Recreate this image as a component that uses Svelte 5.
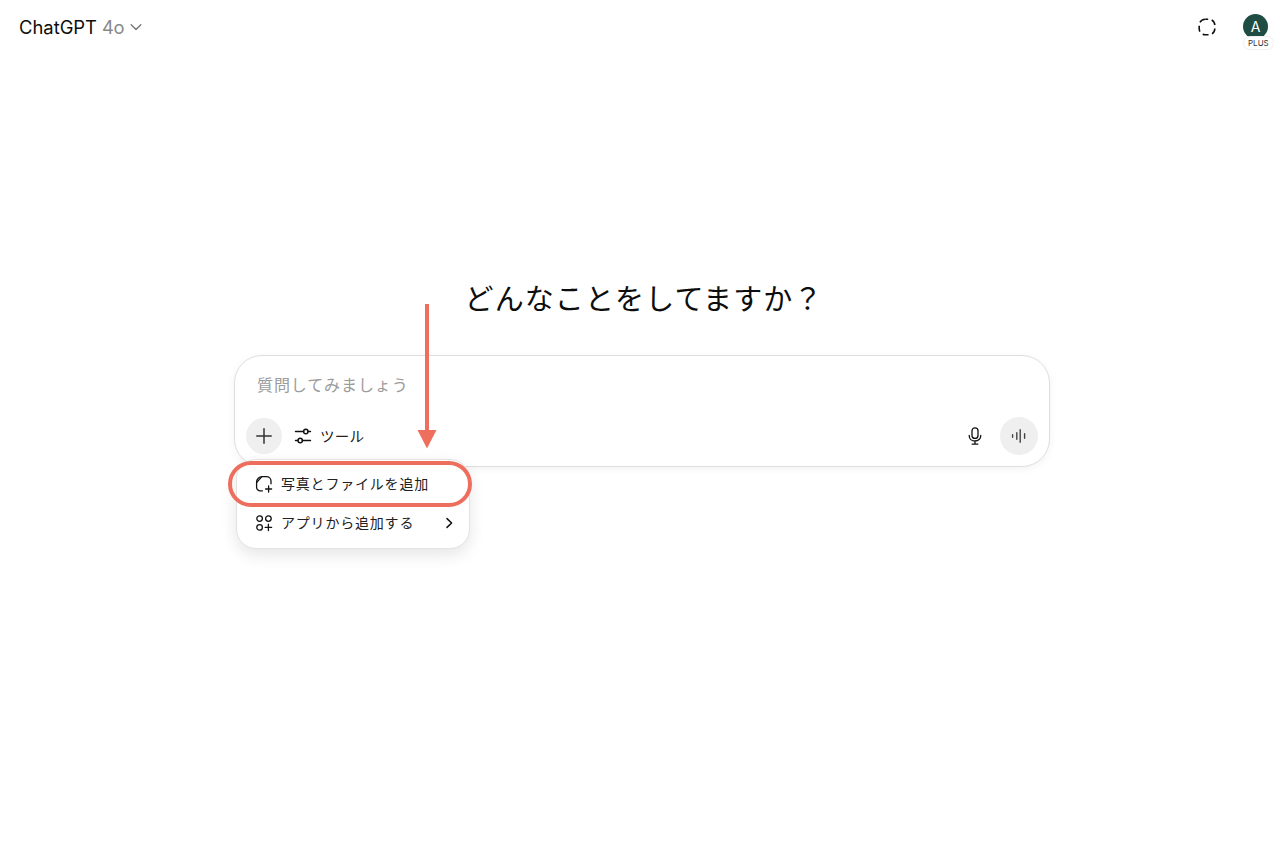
<script>
  const menuItems = [
    { label: "写真とファイルを追加", icon: "file" },
    { label: "アプリから追加する", icon: "apps", more: true }
  ];
</script>

<div class="page">
  <header>
    <div class="model">
      <span>ChatGPT</span>
      <span class="ver">4o</span>
      <svg width="14" height="14" viewBox="0 0 14 14" fill="none" stroke="#777" stroke-width="1.4" stroke-linecap="round" stroke-linejoin="round">
        <path d="M2.2 4.8 7 9.4l4.8-4.6" />
      </svg>
    </div>
    <div class="right">
      <svg width="20" height="20" viewBox="0 0 20 20" fill="none" stroke="#111" stroke-width="1.6">
        <rect x="2.2" y="2.2" width="15.6" height="15.6" rx="6" stroke-dasharray="6 3.6" stroke-dashoffset="3" />
      </svg>
      <div class="avatar">
        A
        <span class="plan">PLUS</span>
      </div>
    </div>
  </header>

  <main>
    <h1>どんなことをしてますか？</h1>

    <div class="composer-wrap">
      <div class="composer">
        <div class="placeholder">質問してみましょう</div>
        <div class="toolbar">
          <button class="round plus" aria-label="追加">
            <svg width="18" height="18" viewBox="0 0 18 18" fill="none" stroke="#333" stroke-width="1.5" stroke-linecap="round">
              <path d="M9 1.8v14.4M1.8 9h14.4" />
            </svg>
          </button>
          <div class="tools">
            <svg width="18" height="18" viewBox="0 0 18 18" fill="none" stroke="#111" stroke-width="1.4" stroke-linecap="round">
              <path d="M1.5 4.5h8.2M14 4.5h2.5M1.5 13.5h2.5M8.3 13.5h8.2" />
              <circle cx="11.8" cy="4.5" r="2.2" />
              <circle cx="6.2" cy="13.5" r="2.2" />
            </svg>
            <span>ツール</span>
          </div>
          <div class="spacer"></div>
          <svg class="mic" width="20" height="20" viewBox="0 0 20 20" fill="none" stroke="#111" stroke-width="1.3" stroke-linecap="round">
            <rect x="7" y="1.8" width="6" height="10.6" rx="3" />
            <path d="M4.2 9.4c0 3.4 2.5 5.6 5.8 5.6s5.8-2.2 5.8-5.6M10 15v3M7.2 18.2h5.6" />
          </svg>
          <button class="round voice" aria-label="音声">
            <svg width="18" height="18" viewBox="0 0 18 18" fill="none" stroke="#444" stroke-width="1.4" stroke-linecap="round">
              <path d="M2.6 7.8v2.4M6.8 5.8v6.4M10.2 2.8v12.4M14.6 6.8v4.4" />
            </svg>
          </button>
        </div>
      </div>

      <div class="menu">
        {#each menuItems as item}
          <div class="item">
            {#if item.icon === "file"}
              <svg width="18" height="18" viewBox="0 0 18 18" fill="none" stroke="#111" stroke-width="1.3" stroke-linecap="round" stroke-linejoin="round">
                <path d="M7.4 15.8H5.2a3.6 3.6 0 0 1-3.6-3.6V7.2c0-3.3 2.5-5.6 5.6-5.6h4.2c2.6 0 4.6 1.9 4.6 4.5v2.7" />
                <path d="M1.8 7.4 6.6 1.8M13.6 11v6M10.6 14h6" />
              </svg>
            {:else}
              <svg width="18" height="18" viewBox="0 0 18 18" fill="none" stroke="#111" stroke-width="1.3" stroke-linecap="round">
                <circle cx="4.6" cy="4.6" r="2.8" />
                <circle cx="13.4" cy="4.6" r="2.8" />
                <circle cx="4.6" cy="13.4" r="2.8" />
                <path d="M13.4 10.2v6.4M10.2 13.4h6.4" />
              </svg>
            {/if}
            <span class="label">{item.label}</span>
            {#if item.more}
              <svg width="14" height="14" viewBox="0 0 14 14" fill="none" stroke="#111" stroke-width="1.5" stroke-linecap="round" stroke-linejoin="round">
                <path d="M5 2.6 9.6 7 5 11.4" />
              </svg>
            {/if}
          </div>
        {/each}
      </div>

      <div class="highlight"></div>

      <svg class="arrow" width="20" height="145" viewBox="0 0 20 145">
        <path d="M10 0v128" stroke="#ef6f5f" stroke-width="4" />
        <path d="M0.5 126h19L10 144.5z" fill="#ef6f5f" />
      </svg>
    </div>
  </main>
</div>

<style>
  :global(body) {
    margin: 0;
    background: #fff;
    color: #0d0d0d;
    font-family: Inter, "Noto Sans CJK JP", sans-serif;
  }

  .page {
    height: 851px;
    overflow: hidden;
  }

  header {
    display: flex;
    align-items: center;
    justify-content: space-between;
    height: 54px;
    padding: 0 12px 0 19px;
  }

  .model {
    display: flex;
    align-items: center;
    gap: 5px;
    font-size: 18.4px;
  }

  .ver {
    color: #8a8a8a;
    letter-spacing: -0.3px;
  }

  .right {
    display: flex;
    align-items: center;
    gap: 26px;
  }

  .avatar {
    position: relative;
    display: flex;
    align-items: center;
    justify-content: center;
    width: 25px;
    height: 25px;
    border-radius: 50%;
    background: #1f4d43;
    color: #fff;
    font-size: 14px;
    font-weight: 400;
    margin-top: -1px;
  }

  .plan {
    position: absolute;
    top: 23px;
    left: 1px;
    padding: 0 4px;
    border-radius: 7px;
    background: #fff;
    box-shadow: 0 0 0 1px #f0f0f0;
    color: #333;
    font-size: 8px;
    line-height: 12px;
    font-weight: 400;
  }

  main {
    display: flex;
    flex-direction: column;
    align-items: center;
    padding: 226px 0 0 4px;
  }

  h1 {
    margin: 0 0 36px;
    padding-left: 4px;
    font-size: 29px;
    line-height: 39px;
    font-weight: 400;
    letter-spacing: 1.1px;
  }

  .composer-wrap {
    position: relative;
    width: 816px;
  }

  .composer {
    box-sizing: border-box;
    height: 112px;
    padding: 19px 11px 11px 11px;
    border: 1px solid #dedede;
    border-radius: 28px;
    background: #fff;
    box-shadow: 0 2px 8px rgba(0, 0, 0, 0.05);
  }

  .placeholder {
    height: 21px;
    padding-left: 11px;
    color: #9b9b9b;
    font-size: 16px;
    letter-spacing: 0.9px;
    line-height: 21px;
  }

  .toolbar {
    display: flex;
    align-items: center;
    margin-top: 21px;
  }

  .round {
    display: flex;
    align-items: center;
    justify-content: center;
    padding: 0;
    border: 0;
    border-radius: 50%;
    background: #efefef;
  }

  .plus {
    width: 36px;
    height: 36px;
  }

  .voice {
    width: 38px;
    height: 38px;
  }

  .tools {
    display: flex;
    align-items: center;
    gap: 8px;
    margin-left: 12px;
    font-size: 14.5px;
    letter-spacing: 0.2px;
    color: #222;
  }

  .tools span {
    margin-bottom: 2px;
  }

  .spacer {
    flex: 1;
  }

  .mic {
    margin-right: 15px;
  }

  .menu {
    position: absolute;
    top: 104px;
    left: 2px;
    box-sizing: border-box;
    width: 234px;
    padding: 4px 0 6px;
    border: 1px solid #e3e3e3;
    border-radius: 20px;
    background: #fff;
    box-shadow: 0 6px 16px rgba(0, 0, 0, 0.1);
  }

  .item {
    display: flex;
    align-items: center;
    gap: 8px;
    height: 39px;
    padding: 0 13px 0 18px;
    font-size: 14px;
    letter-spacing: 0.8px;
    color: #222;
  }

  .label {
    flex: 1;
    margin-bottom: 2px;
  }

  .highlight {
    position: absolute;
    top: 106px;
    left: -6px;
    box-sizing: border-box;
    width: 244px;
    height: 46px;
    border: 4px solid #ee6e5e;
    border-radius: 23px;
  }

  .arrow {
    position: absolute;
    top: -51px;
    left: 183px;
  }
</style>
